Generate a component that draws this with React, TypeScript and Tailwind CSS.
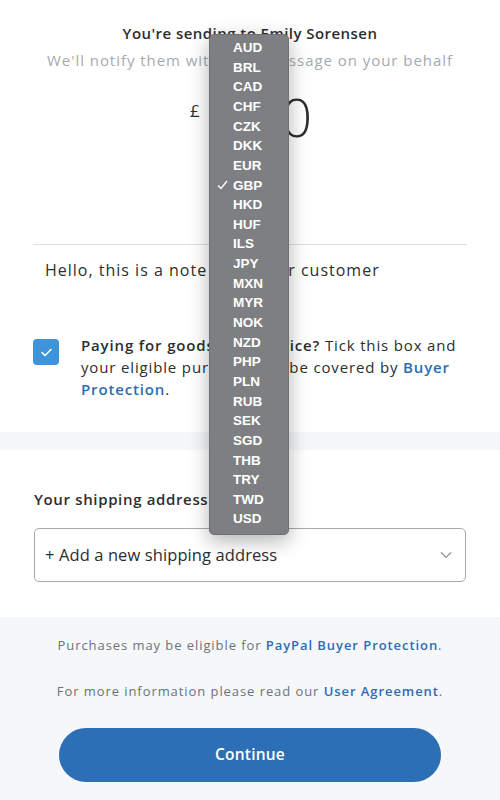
import React from "react";

const currencies = ["AUD","BRL","CAD","CHF","CZK","DKK","EUR","GBP","HKD","HUF","ILS","JPY","MXN","MYR","NOK","NZD","PHP","PLN","RUB","SEK","SGD","THB","TRY","TWD","USD"];

export default function App() {
  return (
    <div className="relative w-[500px] h-[800px] overflow-hidden bg-white text-[#2c2e2f]" style={{ fontFamily: "'Open Sans', Lato, sans-serif" }}>
      {/* Top section */}
      <div className="px-[33px] pt-[22px]">
        <div className="text-center text-[15px] font-semibold leading-[22px] tracking-[0.45px]">You're sending to Emily Sorensen</div>
        <div className="mt-[5px] text-center text-[15px] leading-[22px] tracking-[0.95px] text-[#a5aaad] whitespace-nowrap">We'll notify them with your message on your behalf</div>
        <div className="mt-[20px] flex justify-center items-start h-[60px]">
          <span className="text-[17px] leading-none mt-[11px] mr-[13px]">£</span>
          <span className="text-[54px] font-light leading-none -mt-[2px] tracking-[-2px]">0.00</span>
        </div>
        <div className="h-[93px]" />
        <div className="h-px bg-[#dedede]" />
        <div className="pt-[14px] pl-[12px] text-[16px] leading-[22px] tracking-[1px]">Hello, this is a note from your customer</div>
        <div className="mt-[53px] flex gap-[22px]">
          <div className="mt-[5px] w-[26px] h-[26px] shrink-0 rounded-[4px] bg-[#3e94da] flex items-center justify-center">
            <svg width="11" height="9" viewBox="0 0 11 9" fill="none"><path d="M1 4.5L4 7.5L10 1.5" stroke="white" strokeWidth="1.6" strokeLinecap="round" strokeLinejoin="round"/></svg>
          </div>
          <p className="text-[15px] leading-[22px] tracking-[0.85px]">
            <span className="font-semibold">Paying for goods or a service?</span> Tick this box and your eligible purchase will be covered by <span className="font-semibold text-[#2c6db3]">Buyer Protection</span>.
          </p>
        </div>
      </div>
      <div className="mt-[32px] h-[18px] bg-[#f5f7fa]" />
      {/* Shipping */}
      <div className="px-[34px] pt-[38px] pb-[35px]">
        <div className="text-[15px] font-semibold leading-[22px] tracking-[0.65px]">Your shipping address</div>
        <div className="mt-[18px] h-[54px] rounded-[5px] border border-[#a9a9a9] flex items-center justify-between pl-[10px] pr-[13px]">
          <span className="text-[16.5px] tracking-[0.1px]">+ Add a new shipping address</span>
          <svg width="12" height="8" viewBox="0 0 12 8" fill="none"><path d="M1 1.5L6 6.5L11 1.5" stroke="#8a8f93" strokeWidth="1.1"/></svg>
        </div>
      </div>
      {/* Footer */}
      <div className="bg-[#f5f7fa] h-[200px] pt-[18px] flex flex-col items-center">
        <p className="text-[13px] leading-[20px] tracking-[0.93px] text-[#6c7378] whitespace-nowrap">Purchases may be eligible for <span className="font-semibold text-[#2c6db3]">PayPal Buyer Protection</span>.</p>
        <p className="mt-[26px] text-[13px] leading-[20px] tracking-[0.93px] text-[#6c7378] whitespace-nowrap">For more information please read our <span className="font-semibold text-[#2c6db3]">User Agreement</span>.</p>
        <button className="mt-[27px] w-[382px] h-[54px] rounded-full bg-[#2d6fb4] text-white text-[15.5px] font-semibold tracking-[0.2px]">Continue</button>
      </div>
      {/* Dropdown menu */}
      <div className="absolute left-[209px] top-[34px] w-[80px] h-[501px] rounded-[5px] bg-[#7e7f82] border border-[#6f7072] shadow-[0_6px_20px_rgba(0,0,0,0.3)] pt-[3px]" style={{ fontFamily: "'Liberation Sans', Arial, sans-serif" }}>
        {currencies.map((c) => (
          <div key={c} className="relative h-[19.65px] flex items-center pl-[23px] text-[13.5px] font-bold text-white leading-none">
            {c === "GBP" && (
              <svg className="absolute left-[7px] top-[5px]" width="11" height="10" viewBox="0 0 11 10" fill="none"><path d="M1 5.5L4 8.5L10 1" stroke="white" strokeWidth="1.4"/></svg>
            )}
            {c}
          </div>
        ))}
      </div>
    </div>
  );
}
